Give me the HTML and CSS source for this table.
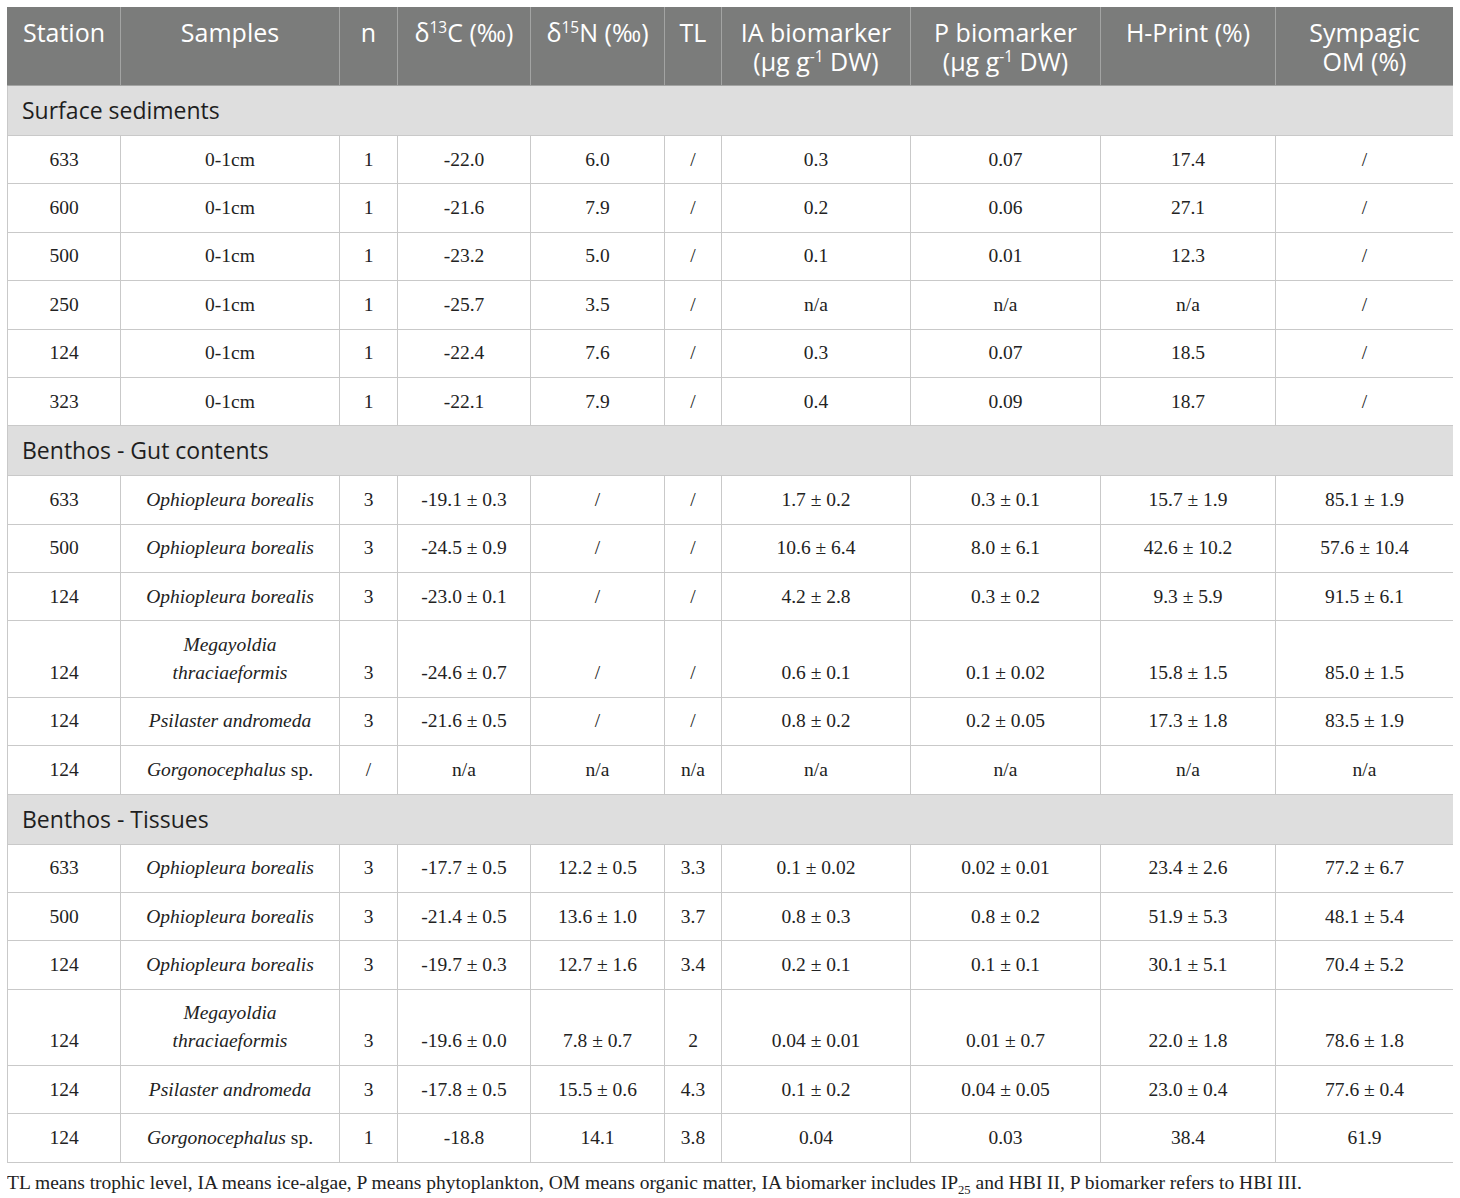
FILE: index.html
```html
<!DOCTYPE html>
<html>
<head>
<meta charset="utf-8">
<link rel="stylesheet" href="styles.css">
</head>
<body>
<table class="data">
<colgroup>
<col class="c1"><col class="c2"><col class="c3"><col class="c4"><col class="c5"><col class="c6"><col class="c7"><col class="c8"><col class="c9"><col class="c10">
</colgroup>
<thead>
<tr>
<th>Station</th>
<th>Samples</th>
<th>n</th>
<th>δ<sup>13</sup>C (‰)</th>
<th>δ<sup>15</sup>N (‰)</th>
<th>TL</th>
<th>IA biomarker<br>(µg g<sup>-1</sup> DW)</th>
<th>P biomarker<br>(µg g<sup>-1</sup> DW)</th>
<th>H-Print (%)</th>
<th>Sympagic<br>OM (%)</th>
</tr>
</thead>
<tbody>
<tr class="sec"><td colspan="10">Surface sediments</td></tr>
<tr><td>633</td><td>0-1cm</td><td>1</td><td>-22.0</td><td>6.0</td><td>/</td><td>0.3</td><td>0.07</td><td>17.4</td><td>/</td></tr>
<tr><td>600</td><td>0-1cm</td><td>1</td><td>-21.6</td><td>7.9</td><td>/</td><td>0.2</td><td>0.06</td><td>27.1</td><td>/</td></tr>
<tr><td>500</td><td>0-1cm</td><td>1</td><td>-23.2</td><td>5.0</td><td>/</td><td>0.1</td><td>0.01</td><td>12.3</td><td>/</td></tr>
<tr><td>250</td><td>0-1cm</td><td>1</td><td>-25.7</td><td>3.5</td><td>/</td><td>n/a</td><td>n/a</td><td>n/a</td><td>/</td></tr>
<tr><td>124</td><td>0-1cm</td><td>1</td><td>-22.4</td><td>7.6</td><td>/</td><td>0.3</td><td>0.07</td><td>18.5</td><td>/</td></tr>
<tr><td>323</td><td>0-1cm</td><td>1</td><td>-22.1</td><td>7.9</td><td>/</td><td>0.4</td><td>0.09</td><td>18.7</td><td>/</td></tr>
<tr class="sec"><td colspan="10">Benthos - Gut contents</td></tr>
<tr><td>633</td><td><i>Ophiopleura borealis</i></td><td>3</td><td>-19.1 ± 0.3</td><td>/</td><td>/</td><td>1.7 ± 0.2</td><td>0.3 ± 0.1</td><td>15.7 ± 1.9</td><td>85.1 ± 1.9</td></tr>
<tr><td>500</td><td><i>Ophiopleura borealis</i></td><td>3</td><td>-24.5 ± 0.9</td><td>/</td><td>/</td><td>10.6 ± 6.4</td><td>8.0 ± 6.1</td><td>42.6 ± 10.2</td><td>57.6 ± 10.4</td></tr>
<tr><td>124</td><td><i>Ophiopleura borealis</i></td><td>3</td><td>-23.0 ± 0.1</td><td>/</td><td>/</td><td>4.2 ± 2.8</td><td>0.3 ± 0.2</td><td>9.3 ± 5.9</td><td>91.5 ± 6.1</td></tr>
<tr><td>124</td><td><i>Megayoldia<br>thraciaeformis</i></td><td>3</td><td>-24.6 ± 0.7</td><td>/</td><td>/</td><td>0.6 ± 0.1</td><td>0.1 ± 0.02</td><td>15.8 ± 1.5</td><td>85.0 ± 1.5</td></tr>
<tr><td>124</td><td><i>Psilaster andromeda</i></td><td>3</td><td>-21.6 ± 0.5</td><td>/</td><td>/</td><td>0.8 ± 0.2</td><td>0.2 ± 0.05</td><td>17.3 ± 1.8</td><td>83.5 ± 1.9</td></tr>
<tr><td>124</td><td><i>Gorgonocephalus</i> sp.</td><td>/</td><td>n/a</td><td>n/a</td><td>n/a</td><td>n/a</td><td>n/a</td><td>n/a</td><td>n/a</td></tr>
<tr class="sec"><td colspan="10">Benthos - Tissues</td></tr>
<tr><td>633</td><td><i>Ophiopleura borealis</i></td><td>3</td><td>-17.7 ± 0.5</td><td>12.2 ± 0.5</td><td>3.3</td><td>0.1 ± 0.02</td><td>0.02 ± 0.01</td><td>23.4 ± 2.6</td><td>77.2 ± 6.7</td></tr>
<tr><td>500</td><td><i>Ophiopleura borealis</i></td><td>3</td><td>-21.4 ± 0.5</td><td>13.6 ± 1.0</td><td>3.7</td><td>0.8 ± 0.3</td><td>0.8 ± 0.2</td><td>51.9 ± 5.3</td><td>48.1 ± 5.4</td></tr>
<tr><td>124</td><td><i>Ophiopleura borealis</i></td><td>3</td><td>-19.7 ± 0.3</td><td>12.7 ± 1.6</td><td>3.4</td><td>0.2 ± 0.1</td><td>0.1 ± 0.1</td><td>30.1 ± 5.1</td><td>70.4 ± 5.2</td></tr>
<tr><td>124</td><td><i>Megayoldia<br>thraciaeformis</i></td><td>3</td><td>-19.6 ± 0.0</td><td>7.8 ± 0.7</td><td>2</td><td>0.04 ± 0.01</td><td>0.01 ± 0.7</td><td>22.0 ± 1.8</td><td>78.6 ± 1.8</td></tr>
<tr><td>124</td><td><i>Psilaster andromeda</i></td><td>3</td><td>-17.8 ± 0.5</td><td>15.5 ± 0.6</td><td>4.3</td><td>0.1 ± 0.2</td><td>0.04 ± 0.05</td><td>23.0 ± 0.4</td><td>77.6 ± 0.4</td></tr>
<tr><td>124</td><td><i>Gorgonocephalus</i> sp.</td><td>1</td><td>-18.8</td><td>14.1</td><td>3.8</td><td>0.04</td><td>0.03</td><td>38.4</td><td>61.9</td></tr>
</tbody>
</table>
<p class="note">TL means trophic level, IA means ice-algae, P means phytoplankton, OM means organic matter, IA biomarker includes IP<sub>25</sub> and HBI II, P biomarker refers to HBI III.</p>
</body>
</html>
```
FILE: styles.css
```css
body {
  margin: 7px;
  background: #ffffff;
  font-family: "Liberation Serif", "Times New Roman", serif;
  color: #222222;
}

.data {
  border-collapse: collapse;
  table-layout: fixed;
  width: 1446px;
}

.c1 { width: 113px; }
.c2 { width: 219px; }
.c3 { width: 58px; }
.c4 { width: 133px; }
.c5 { width: 134px; }
.c6 { width: 57px; }
.c7 { width: 189px; }
.c8 { width: 190px; }
.c9 { width: 175px; }
.c10 { width: 178px; }

.data th {
  background: #7b7c7b;
  color: #ffffff;
  font-family: "Open Sans", "Noto Sans", sans-serif;
  font-weight: 400;
  font-size: 25px;
  line-height: 29px;
  padding: 11px 2px 9px;
  vertical-align: top;
  text-align: center;
  border: 1px solid #a3a4a3;
  border-top: none;
  white-space: nowrap;
}

.data th:first-child { border-left: 1px solid #7b7c7b; }
.data th:last-child { border-right: 1px solid #7b7c7b; }

.data sup {
  font-size: 0.62em;
  line-height: 0;
  vertical-align: 0.55em;
}

.data td {
  border: 1px solid #c9c9c9;
  font-size: 19.5px;
  line-height: 28px;
  padding: 9.7px 2px;
  text-align: center;
  vertical-align: bottom;
  white-space: nowrap;
}

.data tr.sec td {
  background: #dedede;
  font-family: "Open Sans", "Noto Sans", sans-serif;
  font-size: 23px;
  line-height: 29px;
  text-align: left;
  padding: 10px 14px;
  color: #1e1e1e;
}

.note {
  margin: 8px 0 0;
  font-size: 19.5px;
  line-height: 24px;
  color: #222222;
  white-space: nowrap;
}

.note sub {
  font-size: 0.65em;
  line-height: 0;
}
```
